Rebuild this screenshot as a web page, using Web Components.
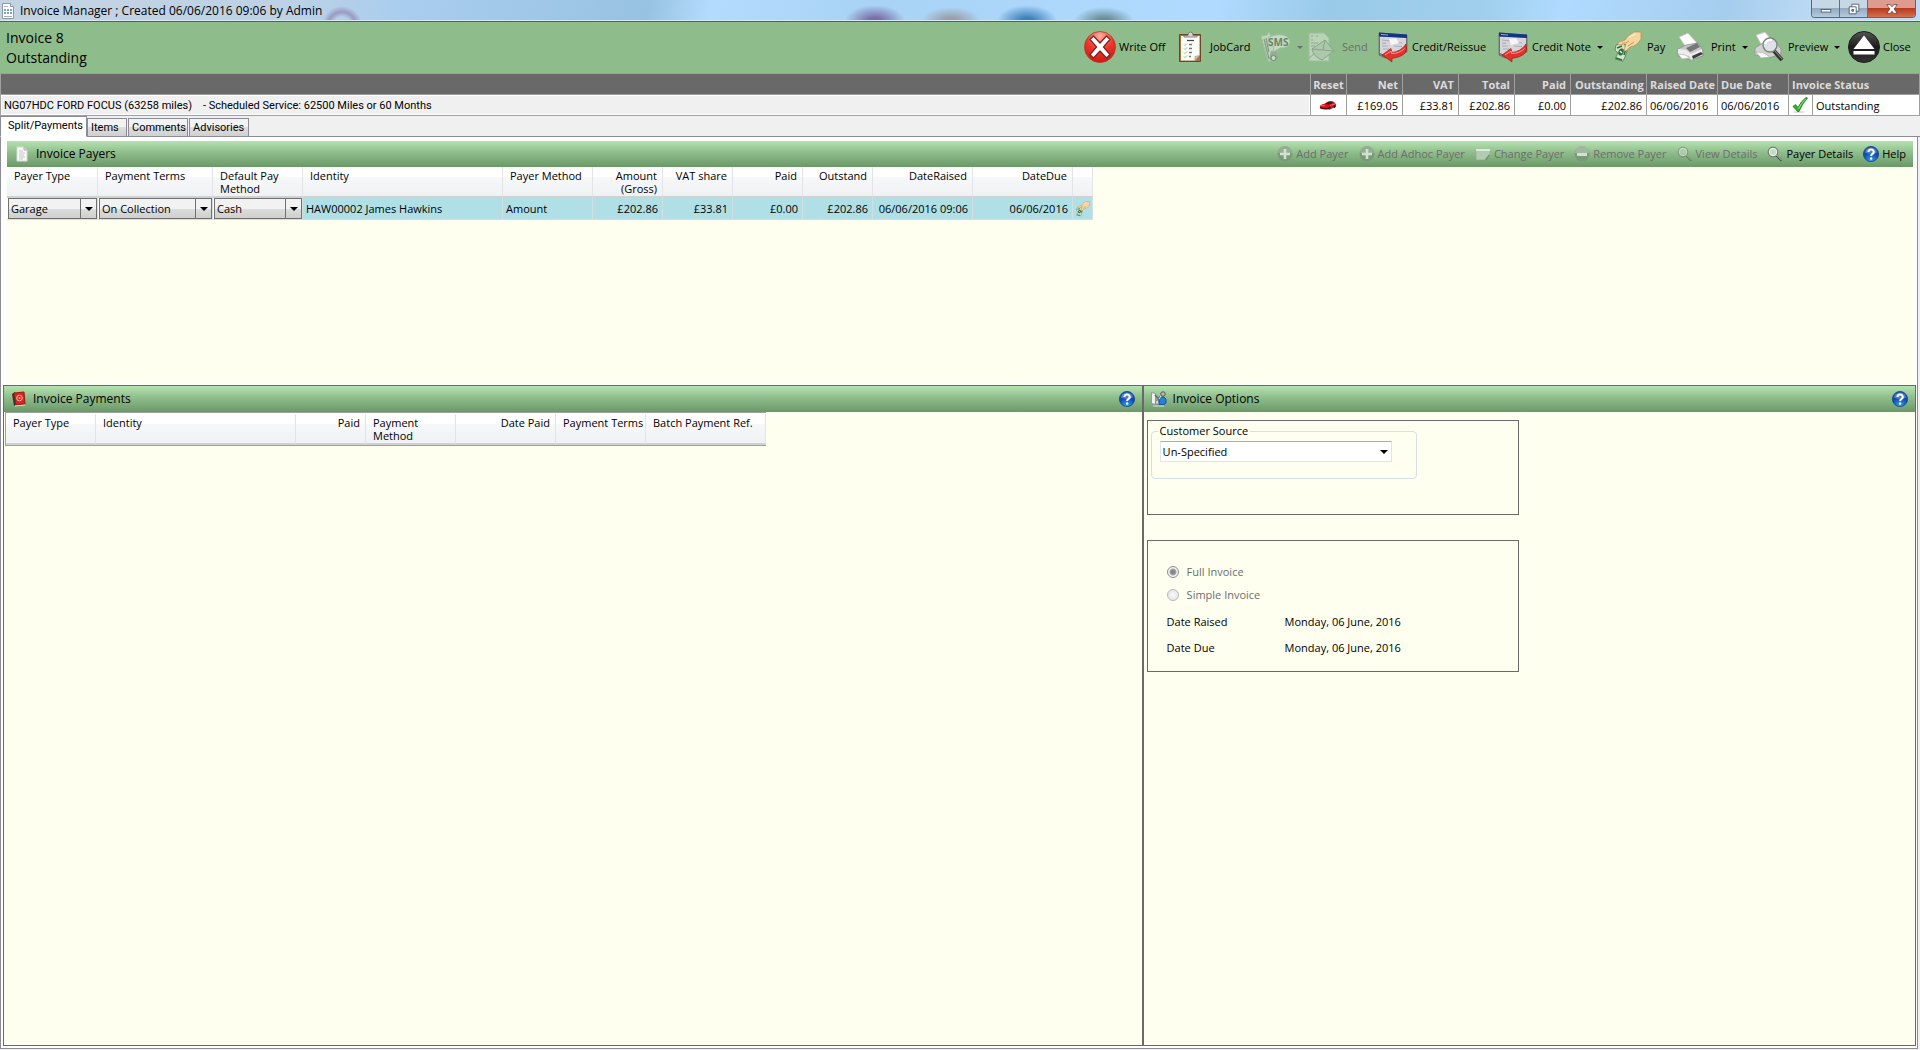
<!DOCTYPE html>
<html lang="en">
<head>
<meta charset="utf-8">
<title>Invoice Manager</title>
<style>
	body {
		margin: 0;
		font: 11px/14px "Open Sans", "Noto Sans", sans-serif;
		color: #000;
		background: #f0f0f0;
	}
</style>
</head>
<body>
<invoice-window></invoice-window>

<script>
// Icon drawings, keyed by name: [viewBox size, markup]
const ICONS = {
	page: [16, `
		<path d="M2.5.5h8l3 3v12h-11z" fill="#fff" stroke="#8d99a3"/>
		<path d="M10.5.5v3h3" fill="#dde3e8" stroke="#8d99a3"/>
		<path d="M4 3.5h4M4 13.5h8" stroke="#a9b3bc"/>
		<path d="M4 6h8v5H4z" fill="#7ba4d0"/>
		<path d="M6.5 6v5M9.5 6v5M4 8.5h8" stroke="#fff"/>`],
	sheet: [16, `
		<path d="M3 1h7l3 3v11H3z" fill="#fafafa" stroke="#d5ddd5"/>
		<path d="M10 1v3h3" fill="#ddd" stroke="#aaa"/>
		<path d="M5 5h4M5 7h6M5 9h5M5 11h6M5 13h4" stroke="#c4c4c4"/>`],
	ledger: [16, `
		<path d="M1 3l3-2 2 12-3 2z" fill="#333"/>
		<path d="M3 2l10-1 1 12-9 1z" fill="#d9251c" stroke="#9d1a14"/>
		<path d="M4 15l10-1" stroke="#ddd"/>
		<circle cx="8.5" cy="7" r="2.8" fill="none" stroke="#ffb9ad"/>
		<circle cx="8.5" cy="7" r="1" fill="#ffb9ad"/>`],
	options: [16, `
		<path d="M.5 1.5l4 1v11l-4-1z" fill="#f0f0f0" stroke="#999"/>
		<path d="M4 13l2-5 3 5z" fill="#e4e4e4" stroke="#888"/>
		<path d="M8 6h5l2 2v4l-2 1.5H8z" fill="#2580dc" stroke="#1a5799"/>
		<circle cx="12" cy="3" r="2.2" fill="#bbb" stroke="#555"/>
		<path d="M4 4l5 5" stroke="#666" stroke-width="1.5"/>
		<path d="M10 5l-2 3" stroke="#eee"/>
		<path d="M2 15h11" stroke="#ddd"/>`],
	help: [16, `
		<defs><radialGradient id="g" cx=".5" cy=".95" r=".9">
			<stop offset="0" stop-color="#35a5f0"/><stop offset=".6" stop-color="#0d4cb4"/><stop offset="1" stop-color="#1b55b3"/>
		</radialGradient></defs>
		<circle cx="8" cy="8" r="7.6" fill="url(#g)" stroke="#17418c" stroke-width=".8"/>
		<path d="M2 6.5a6.2 6.2 0 0 1 12 0q-6 2.5-12 0z" fill="#fff" opacity=".28"/>
		<path d="M5.5 6a2.6 2.4 0 1 1 4 1.9q-1.4.8-1.4 2.1" fill="none" stroke="#fff" stroke-width="2"/>
		<circle cx="8.1" cy="12.5" r="1.2" fill="#fff"/>`],
	add: [16, `
		<circle cx="8" cy="8" r="7.5" fill="#7c9a7b"/>
		<path d="M1 7a7 7 0 0 1 14 0z" fill="#94ae93"/>
		<path d="M8 3v10M3 8h10" stroke="#cfe4cd" stroke-width="2.6"/>`],
	remove: [16, `
		<circle cx="8" cy="8" r="7.5" fill="#7c9a7b"/>
		<path d="M1 7a7 7 0 0 1 14 0z" fill="#9fb99e"/>
		<path d="M3 8.5h10" stroke="#cfe4cd" stroke-width="3"/>`],
	change: [16, `
		<path d="M1.5 3.5h13v7l-3 3h-10z" fill="#b1ccb0" stroke="#a4bfa3"/>
		<path d="M1 4h14" stroke="#dceadb" stroke-width="2"/>
		<path d="M14.5 9l-4 5" stroke="#6f8c6e" stroke-width="1.5"/>`],
	lens: [16, `
		<circle cx="6" cy="6" r="4.8" fill="#c3dcc2" stroke="#6c786c" stroke-width="1.2"/>
		<circle cx="6" cy="6" r="3.7" fill="none" stroke="#f1f6f1"/>
		<path d="M9.5 9.5l5 5" stroke="#444" stroke-width="2.2"/>
		<path d="M9.5 9l5 5" stroke="#ddd"/>`],
	car: [18, `
		<path d="M1 10.5q0-2 4-2.5l4-2.500q4-1 6 .5l1.500 1.500q1 1 .5 3L12 13q-7 1-11-1z" fill="#d3141d"/>
		<path d="M6 8l3.500-2q3-.5 4.500.5l-3 2z" fill="#3a1a1a"/>
		<path d="M1 11.500q5 2 9 .8" stroke="#5b060a" stroke-width="1.4"/>
		<path d="M2 9.500l4 .3M11 9.500l5-1.500" stroke="#ff7f7f" stroke-width=".8"/>
		<ellipse cx="10.500" cy="12" rx="1.2" ry="1.600" fill="#222"/>
		<ellipse cx="15.500" cy="10.500" rx="1" ry="1.500" fill="#222"/>`],
	tick: [16, `
		<ellipse cx="7" cy="15" rx="6" ry="1" fill="#ddd"/>
		<path d="M1 9.500l2.500-2L6 10.500Q9 4 14 .5l1.500.5Q10 7 7 14.500H5.500Q3.500 12 1 9.500z" fill="#36b22c" stroke="#1b7a19" stroke-width=".8"/>
		<path d="M6.500 12Q9 6 13.500 2" stroke="#9be58f" fill="none"/>`],
	writeoff: [32, `
		<defs><radialGradient id="g" cx=".5" cy=".15" r=".9">
			<stop offset="0" stop-color="#ffb0a0"/><stop offset=".5" stop-color="#f0342d"/><stop offset="1" stop-color="#cc1410"/>
		</radialGradient></defs>
		<circle cx="16" cy="16" r="15.5" fill="url(#g)" stroke="#b9332c" stroke-width=".8"/>
		<path d="M6 8.500L9.500 5 16 12l6.500-7L26 8.500 19.500 16l6.500 7.500L22.500 27 16 20l-6.500 7L6 23.500 12.500 16z" fill="#fff" stroke="#7c221d" stroke-width="1.2" stroke-linejoin="round"/>`],
	jobcard: [32, `
		<path d="M4.500 3.500h21v27h-21z" fill="#a77445" stroke="#704621"/>
		<path d="M6 5h18.500v19.500l-4.500 5H6z" fill="#fbfbf7"/>
		<path d="M24.500 24.500l-4.500 5v-4z" fill="#cfcabb" stroke="#928b78" stroke-width=".6"/>
		<path d="M9 6V4.500h4Q13 1 15.500 1T18 4.500h4V6z" fill="#d5d5d5" stroke="#707070" stroke-width=".8"/>
		<path d="M12 9.500h7" stroke="#444" stroke-width="1.2"/>
		<path d="M9 13.500l1 1 2-2M9 17.500l1 1 2-2M9 21.500l1 1 2-2M9 25.500l1 1 2-2" fill="none" stroke="#6db381" stroke-width=".8"/>
		<path d="M14 13.500h3M14 17.500h3M14 21.500h3M14 25.500h2" stroke="#777" stroke-width="1.4"/>`],
	sms: [32, `
		<path d="M2 5l6-1 2-3 2 4 4 1-1 3 4 12-3 9H9z" fill="#bdd7bb" stroke="#a0bd9f"/>
		<path d="M5 8l5 20M7 7l3 14" stroke="#7f9c7e" stroke-width="1.2"/>
		<path d="M12 20l6-1 1 8-5 4-4-3z" fill="#91ac90"/>
		<circle cx="14.5" cy="27" r="2.5" fill="#c6dac5" stroke="#718d70"/>
		<path d="M10 6q10-4 17-1 4 2 4 7-2 5-10 5l-7 4 1-5q-5-1-6-5 0-4 1-5z" fill="#c4dbc2" stroke="#a3bfa2"/>
		<text x="9" y="15" font-family="Open Sans, sans-serif" font-size="10" font-weight="700" fill="#698568">SMS</text>`],
	send: [32, `
		<path d="M2 2h15l5 5v23H2z" fill="#b8d3b7" stroke="#a0bd9f"/>
		<path d="M4 5h2M9 5h2M4 9h2M4 12h7M4 15h4" stroke="#9ab699" stroke-width="1.5"/>
		<path d="M5 18L18 9l9 11-12 9q-9-4-10-11z" fill="#abc9aa" stroke="#88a587"/>
		<path d="M5 18l11 1 2-10M27 20l-11-1" fill="none" stroke="#88a587"/>
		<path d="M2 27l5-4" stroke="#8eac8d"/>`],
	credit: [32, `
		<path d="M2 2l28 2v17L8 27l-6-3z" fill="#77777d" stroke="#5c5c63" stroke-width=".6"/>
		<path d="M3 5.500l26 1V20L8 24l-5-2z" fill="#d6d6da"/>
		<path d="M2 1.500l28 2V7L2 5.500z" fill="#143488"/>
		<path d="M4 3.500l7 .5" stroke="#b7c5ec" stroke-width=".8"/>
		<path d="M5 9l8 1M5 12l4 .3M16 11l9 1M5 15h6M17 15l8 .5M6 18h8" stroke="#acacb5" stroke-width="1.2"/>
		<path d="M12 8l7-1 3 5-8 2z" fill="#f6f6f8"/>
		<path d="M29 13q4 12-14 14.500v3.500L5 24l9-6.500 1 4q9-1 14-8.500z" fill="#e6302c" stroke="#9c1717" stroke-width=".6"/>
		<path d="M8 24l6-4 .5 2.500q8 0 13-5" fill="none" stroke="#ff9c92"/>`],
	pay: [32, `
		<path d="M4 14l8-2 3 8-2 6-2 4-8-2 3-6-3-3z" fill="#cfe8c6" stroke="#4e7a53" stroke-width=".8"/>
		<path d="M5 17l5-2M4 27l6 2M12 24l2-6" stroke="#2f6b40" stroke-width="1.5"/>
		<ellipse cx="9" cy="21" rx="2.6" ry="3.6" fill="#2f6b40" transform="rotate(20 9 21)"/>
		<path d="M8 20l2 2" stroke="#e4f4dd" stroke-width="1.5"/>
		<path d="M29 1v7q-4 7-11 8l-4 4q-3 0-1-4l1-3-7 1q-2-1 0-3l6-2 3-4 6-4z" fill="#f5d5a0" stroke="#b88c55" stroke-width=".7"/>
		<path d="M10 12q4 1 7-2M16 15l6-4" fill="none" stroke="#c99a60"/>
		<path d="M17 6l7-3" stroke="#fff0ce"/>`],
	print: [32, `
		<path d="M3 6l9-4 9 10-10 6z" fill="#fff" stroke="#bcbcbc" stroke-width=".8"/>
		<path d="M2 18l8-4 12-2 5 7v6l-13 4L2 25z" fill="#c9c9c9" stroke="#8a8a8a" stroke-width=".8"/>
		<path d="M10 17l11-5 3 4-10 5z" fill="#777"/>
		<path d="M2 18l8 1 5 4 11-5v6l-11 5-2-4-11-2z" fill="#ededed"/>
		<path d="M16 25l9-4 2 2-10 5z" fill="#3d3d3d"/>
		<path d="M2 23l7 1 5 3-8 1z" fill="#fff" stroke="#aaa" stroke-width=".6"/>`],
	preview: [32, `
		<path d="M3 4l9-3 8 10-10 6z" fill="#fff" stroke="#bcbcbc" stroke-width=".8"/>
		<path d="M2 17l8-5 12-2 6 8v5l-12 4-14-3z" fill="#d2d2d2" stroke="#8f8f8f" stroke-width=".8"/>
		<path d="M3 21l8 1 6 4-9 1z" fill="#fff" stroke="#aaa" stroke-width=".6"/>
		<path d="M21 20l8 9" stroke="#333" stroke-width="4"/>
		<path d="M21 19l8 9" stroke="#999"/>
		<circle cx="17" cy="14" r="7" fill="#dfe6e8" fill-opacity=".85" stroke="#7d7d7d" stroke-width="1.3"/>
		<path d="M12 13q2-5 7-4" fill="none" stroke="#fff" stroke-width="2"/>`],
	eject: [32, `
		<defs><linearGradient id="g" x2="0" y2="1"><stop offset="0" stop-color="#555"/><stop offset=".5" stop-color="#1c1c1c"/><stop offset="1" stop-color="#333"/></linearGradient></defs>
		<circle cx="16" cy="16" r="15.5" fill="url(#g)" stroke="#1d1d1d"/>
		<path d="M16 4.500L26.500 18h-21zM5.500 20h21v3.500h-21z" fill="#fff"/>`],
	minimise: [16, `<rect x="2.5" y="8.5" width="11" height="3" fill="#fff" stroke="#4b5a6b"/>`],
	restore: [16, `
		<path d="M5.5 2.5h8v8h-8z" fill="#fff" stroke="#4b5a6b"/>
		<path d="M2.5 5.5h8v8h-8z" fill="#fff" stroke="#4b5a6b"/>
		<path d="M5.5 8.5h2v2h-2z" fill="#8fa5bb" stroke="#4b5a6b"/>`],
	cross: [16, `<path d="M2 3h4l2 2.500L10 3h4l-3.500 5 3.500 5h-4l-2-2.500L6 13H2l3.500-5z" fill="#fff" stroke="#5d2a2a" stroke-width=".8"/>`]
};

class AppIcon extends HTMLElement {
	constructor() {
		super();
		this.attachShadow({ mode: 'open' });
	}

	connectedCallback() {
		const [box, markup] = ICONS[this.getAttribute('name')];
		const size = this.getAttribute('size') || box;
		this.shadowRoot.innerHTML = `
			<style>
				:host { display: inline-block; flex: none; vertical-align: top; }
				svg { display: block; }
			</style>
			<svg width="${size}" height="${size}" viewBox="0 0 ${box} ${box}" fill="none" aria-hidden="true">${markup}</svg>
		`;
	}
}
customElements.define('app-icon', AppIcon);

// Flat button with an icon, a label in the slot and an optional drop-down caret
class ToolButton extends HTMLElement {
	constructor() {
		super();
		this.attachShadow({ mode: 'open' });
	}

	connectedCallback() {
		const size = this.getAttribute('size') || 16;
		this.shadowRoot.innerHTML = `
			<style>
				:host { display: block; }
				button {
					display: flex;
					align-items: center;
					gap: 3px;
					padding: 0;
					border: 0;
					background: none;
					color: inherit;
					font: inherit;
					white-space: nowrap;
				}
				button:disabled { color: #6d6d6d; }
				:host([faded]) app-icon { opacity: 0.5; }
				.caret {
					margin-left: 3px;
					border: solid transparent;
					border-width: 3px 3px 0;
					border-top-color: currentColor;
				}
			</style>
			<button type="button" ${this.hasAttribute('disabled') ? 'disabled' : ''} aria-label="${this.getAttribute('label') || this.textContent}">
				<app-icon name="${this.getAttribute('icon')}" size="${size}"></app-icon>
				<slot></slot>
				${this.hasAttribute('menu') ? '<span class="caret"></span>' : ''}
			</button>
		`;
	}
}
customElements.define('tool-button', ToolButton);

class TitleBar extends HTMLElement {
	constructor() {
		super();
		this.attachShadow({ mode: 'open' }).innerHTML = `
			<style>
				:host {
					display: flex;
					justify-content: space-between;
					box-sizing: border-box;
					height: 22px;
					padding: 0 4px 0 0;
					border-bottom: 1px solid #4c6070;
					box-shadow: inset 0 -1px #dbe9f5;
					font-size: 12px;
					background:
						radial-gradient(circle at 342px 26px, transparent 9px, #8f7faeaa 14px, transparent 20px),
						radial-gradient(30px 16px at 875px 21px, #7a6fa8 20%, #7a6fa800),
						radial-gradient(30px 14px at 951px 21px, #9a9ea6 20%, #9a9ea600),
						radial-gradient(30px 16px at 1027px 21px, #3c82bd 20%, #3c82bd00),
						radial-gradient(30px 14px at 1104px 21px, #688f98 20%, #688f9800),
						linear-gradient(100deg, #c3d3e3 0, #bdd2e6 280px, #a9cdee 400px, #98c2e2 640px, #b3dbfd 700px, #a9d3f5 850px, #b0daff 1200px, #99cae8 1310px, #9fcfec 1460px, #b0daff 1540px, #a5cdee 1700px, #bfdbf5 1800px);
				}
				.caption { display: flex; align-items: center; gap: 2px; }
				.caption span { padding: 0 2px; }
				.controls {
					display: flex;
					height: 17px;
					border: 1px solid #56697c;
					border-top: 0;
					border-radius: 0 0 4px 4px;
					overflow: hidden;
				}
				button {
					display: grid;
					place-items: center;
					width: 28px;
					padding: 0;
					border: 0;
					border-right: 1px solid #5d7083;
					background: linear-gradient(#c6d7e6 45%, #94aabf 50%, #b5cce0);
				}
				button.close {
					width: 47px;
					border: 0;
					background: linear-gradient(#dd9c8e 45%, #b83a20 50%, #d4704f);
				}
			</style>
			<div class="caption"><app-icon name="page"></app-icon><span><slot></slot></span></div>
			<div class="controls">
				<button type="button" aria-label="Minimise"><app-icon name="minimise" size="14"></app-icon></button>
				<button type="button" aria-label="Restore"><app-icon name="restore" size="14"></app-icon></button>
				<button type="button" class="close" aria-label="Close window"><app-icon name="cross" size="14"></app-icon></button>
			</div>
		`;
	}
}
customElements.define('title-bar', TitleBar);

class InvoiceToolbar extends HTMLElement {
	constructor() {
		super();
		this.attachShadow({ mode: 'open' }).innerHTML = `
			<style>
				:host {
					display: flex;
					justify-content: space-between;
					align-items: flex-start;
					box-sizing: border-box;
					height: 51px;
					padding: 6px 5px 0 6px;
					background: #8fbc8b;
				}
				h1 {
					margin: 0;
					font-size: 14px;
					font-weight: 400;
					line-height: 20px;
				}
				nav {
					display: grid;
					grid-template-columns: 91px 84px 48px 70px 120px 115px 64px 77px 95px 67px;
					padding-top: 3px;
				}
			</style>
			<h1>Invoice 8<br>Outstanding</h1>
			<nav>
				<tool-button size="32" icon="writeoff">Write Off</tool-button>
				<tool-button size="32" icon="jobcard">JobCard</tool-button>
				<tool-button size="32" icon="sms" label="SMS" menu disabled></tool-button>
				<tool-button size="32" icon="send" disabled>Send</tool-button>
				<tool-button size="32" icon="credit">Credit/Reissue</tool-button>
				<tool-button size="32" icon="credit" menu>Credit Note</tool-button>
				<tool-button size="32" icon="pay">Pay</tool-button>
				<tool-button size="32" icon="print" menu>Print</tool-button>
				<tool-button size="32" icon="preview" menu>Preview</tool-button>
				<tool-button size="32" icon="eject">Close</tool-button>
			</nav>
		`;
	}
}
customElements.define('invoice-toolbar', InvoiceToolbar);

class InvoiceSummary extends HTMLElement {
	constructor() {
		super();
		this.attachShadow({ mode: 'open' }).innerHTML = `
			<style>
				:host { display: block; }
				table {
					width: 100%;
					table-layout: fixed;
					border-collapse: collapse;
				}
				th, td {
					box-sizing: border-box;
					height: 21px;
					padding: 2px 4px 0;
					border: 1px solid #a0a0a0;
					text-align: right;
					white-space: nowrap;
				}
				th { color: #dcdcdc; background: #696969; }
				td { background: #fff; }
				.left { text-align: left; padding: 2px 3px 0; }
				.icon { padding: 0; text-align: center; }
				th.icon { padding-top: 2px; }
				.icon app-icon { vertical-align: middle; }
				td.vehicle {
					background: #f0f0f0;
					box-shadow: inset 0 0 0 1px #fff;
					font-family: Roboto, "Liberation Sans", sans-serif;
					white-space: pre;
				}
			</style>
			<table>
				<colgroup>
					<col><col style="width:36px"><col style="width:56px"><col style="width:56px">
					<col style="width:56px"><col style="width:56px"><col style="width:76px">
					<col style="width:71px"><col style="width:71px"><col style="width:24px"><col style="width:107px">
				</colgroup>
				<tr>
					<th></th><th class="icon">Reset</th><th>Net</th><th>VAT</th><th>Total</th><th>Paid</th>
					<th>Outstanding</th><th class="left">Raised Date</th><th class="left">Due Date</th>
					<th class="left" colspan="2">Invoice Status</th>
				</tr>
				<tr>
					<td class="left vehicle">NG07HDC FORD FOCUS (63258 miles)    - Scheduled Service: 62500 Miles or 60 Months</td>
					<td class="icon"><app-icon name="car"></app-icon></td>
					<td>£169.05</td><td>£33.81</td><td>£202.86</td><td>£0.00</td><td>£202.86</td>
					<td class="left">06/06/2016</td><td class="left">06/06/2016</td>
					<td class="icon"><app-icon name="tick"></app-icon></td>
					<td class="left">Outstanding</td>
				</tr>
			</table>
		`;
	}
}
customElements.define('invoice-summary', InvoiceSummary);

class TabStrip extends HTMLElement {
	constructor() {
		super();
		this.attachShadow({ mode: 'open' }).innerHTML = `
			<style>
				:host {
					display: block;
					font-family: Roboto, "Liberation Sans", sans-serif;
				}
				div {
					display: flex;
					align-items: flex-end;
					height: 21px;
					box-shadow: inset 0 -1px #8b8c95;
				}
				button {
					box-sizing: border-box;
					height: 19px;
					margin-right: 1px;
					padding: 1px 3px 0;
					border: 1px solid #8b8c95;
					background: linear-gradient(#f3f3f3 50%, #dedede 50%, #d0d0d0);
					font: inherit;
					text-align: left;
					color: inherit;
				}
				button[aria-selected="true"] {
					height: 21px;
					width: 87px;
					margin: 0;
					padding: 0 7px 2px;
					border-bottom-color: #fff;
					background: #fff;
				}
				.narrow { width: 40px; }
				.wide { width: 60px; }
			</style>
			<div role="tablist">
				<button type="button" role="tab" aria-selected="true">Split/Payments</button>
				<button type="button" role="tab" aria-selected="false" class="narrow">Items</button>
				<button type="button" role="tab" aria-selected="false" class="wide">Comments</button>
				<button type="button" role="tab" aria-selected="false" class="wide">Advisories</button>
			</div>
		`;
	}
}
customElements.define('tab-strip', TabStrip);

// Green gradient heading; actions go in the "actions" slot
class PanelHeader extends HTMLElement {
	constructor() {
		super();
		this.attachShadow({ mode: 'open' });
	}

	connectedCallback() {
		this.shadowRoot.innerHTML = `
			<style>
				:host {
					display: flex;
					align-items: center;
					justify-content: space-between;
					height: 26px;
					padding: 0 7px;
					background: linear-gradient(#b5e3b0, #8fbc8b 45%, #6a9967);
				}
				h2 {
					display: flex;
					align-items: center;
					gap: 6px;
					margin: 0;
					font-size: 12px;
					font-weight: 400;
				}
				div { display: flex; gap: 10px; }
			</style>
			<h2><app-icon name="${this.getAttribute('icon')}"></app-icon><slot></slot></h2>
			<div><slot name="actions"></slot></div>
		`;
	}
}
customElements.define('panel-header', PanelHeader);

// Drop-down list; variant "button" has the raised look used in grids
class DropList extends HTMLElement {
	constructor() {
		super();
		this.attachShadow({ mode: 'open' });
	}

	connectedCallback() {
		this.shadowRoot.innerHTML = `
			<style>
				:host { display: grid; height: 21px; }
				select, .arrow { grid-area: 1 / 1; }
				select {
					appearance: none;
					box-sizing: border-box;
					width: 100%;
					min-width: 0;
					padding: 0 20px 0 2px;
					border: 1px solid #e3e3ea;
					border-top-color: #abadb3;
					border-radius: 0;
					background: #fff;
					color: inherit;
					font: inherit;
				}
				.arrow {
					display: grid;
					place-items: center;
					justify-self: end;
					width: 16px;
					pointer-events: none;
				}
				.arrow::after {
					content: "";
					border: solid transparent;
					border-width: 4px 4px 0;
					border-top-color: #000;
				}
				:host([variant="button"]) select {
					border-color: #707070;
					background: linear-gradient(#f2f2f2 50%, #dddddd 50%, #cfcfcf);
				}
				:host([variant="button"]) .arrow { border-left: 1px solid #707070; }
			</style>
			<select aria-label="${this.getAttribute('label')}"><option>${this.getAttribute('value')}</option></select>
			<span class="arrow"></span>
		`;
	}
}
customElements.define('drop-list', DropList);

// Grid with fixed columns: columns = [{ title, width, right }], rows = [[html, ...]]
class DataGrid extends HTMLElement {
	constructor() {
		super();
		this.attachShadow({ mode: 'open' });
	}

	set data({ columns, rows }) {
		const total = columns.reduce((sum, col) => sum + col.width, 0);
		const side = col => col.right ? 'class="right"' : '';
		this.shadowRoot.innerHTML = `
			<style>
				:host { display: block; width: max-content; }
				:host([framed]) {
					margin-left: 1px;
					padding-top: 1px;
					border: solid #a0a0a0;
					border-width: 1px 0 1px 1px;
					background: #fff;
				}
				table {
					table-layout: fixed;
					border-spacing: 0;
				}
				th {
					box-sizing: border-box;
					height: 31px;
					padding: 2px 5px 0 7px;
					border-right: 1px solid #e2e4e8;
					border-bottom: 2px solid #d0d1d3;
					background: linear-gradient(#fff 34%, #f7f8fa 34%, #f0f1f3);
					font-weight: 400;
					line-height: 13px;
					text-align: left;
					vertical-align: top;
					white-space: nowrap;
				}
				td {
					box-sizing: border-box;
					height: 22px;
					padding: 0 4px 0 3px;
					border-right: 1px solid #d3dfe1;
					border-bottom: 1px solid #d3dfe1;
					background: #b0e0e6;
					white-space: nowrap;
				}
				td.control { padding: 0 0 0 1px; background: #fff; }
				.right { text-align: right; }
				td.icon { padding: 0; text-align: center; }
				td.icon app-icon { vertical-align: middle; }
			</style>
			<table style="width:${total}px">
				<colgroup>${columns.map(col => `<col style="width:${col.width}px">`).join('')}</colgroup>
				<thead><tr>${columns.map(col => `<th ${side(col)}>${col.title}</th>`).join('')}</tr></thead>
				<tbody>${rows.map(row => `<tr>${row.map((cell, i) => {
					if (cell.startsWith('<drop-list')) return `<td class="control">${cell}</td>`;
					if (cell.startsWith('<app-icon')) return `<td class="icon">${cell}</td>`;
					return `<td ${side(columns[i])}>${cell}</td>`;
				}).join('')}</tr>`).join('')}</tbody>
			</table>
		`;
	}
}
customElements.define('data-grid', DataGrid);

class InvoiceOptions extends HTMLElement {
	constructor() {
		super();
		this.attachShadow({ mode: 'open' }).innerHTML = `
			<style>
				:host {
					display: grid;
					gap: 25px;
					padding: 8px 3px;
					justify-items: start;
				}
				section {
					box-sizing: border-box;
					width: 372px;
					border: 1px solid #696969;
				}
				.source { height: 95px; padding: 2px 3px; }
				fieldset {
					box-sizing: border-box;
					width: 266px;
					height: 56px;
					margin: 0;
					padding: 2px 24px 0 8px;
					border: 1px solid #d5dfe5;
					border-radius: 4px;
				}
				legend { margin-left: -2px; padding: 0 2px; line-height: 16px; }
				.kind { padding: 19px 19px 10px; }
				.radio {
					display: flex;
					align-items: center;
					gap: 8px;
					height: 23px;
					color: #6d6d6d;
				}
				input {
					appearance: none;
					box-sizing: border-box;
					width: 12px;
					height: 12px;
					margin: 0;
					border: 1px solid #b8b8b8;
					border-radius: 50%;
					background: radial-gradient(#fafafa, #e0e0e0);
				}
				input:checked {
					border-color: #8c8c8c;
					background: radial-gradient(#888 0 2px, #aaa 3px, #f4f4f4 4px);
				}
				dl {
					display: grid;
					grid-template-columns: 118px 1fr;
					margin: 3px 0 0;
					line-height: 26px;
				}
				dd { margin: 0; }
			</style>
			<section class="source">
				<fieldset>
					<legend>Customer Source</legend>
					<drop-list label="Customer Source" value="Un-Specified"></drop-list>
				</fieldset>
			</section>
			<section class="kind">
				<label class="radio"><input type="radio" name="kind" checked disabled>Full Invoice</label>
				<label class="radio"><input type="radio" name="kind" disabled>Simple Invoice</label>
				<dl>
					<dt>Date Raised</dt><dd>Monday, 06 June, 2016</dd>
					<dt>Date Due</dt><dd>Monday, 06 June, 2016</dd>
				</dl>
			</section>
		`;
	}
}
customElements.define('invoice-options', InvoiceOptions);

class InvoiceWindow extends HTMLElement {
	constructor() {
		super();
		this.attachShadow({ mode: 'open' }).innerHTML = `
			<style>
				:host {
					display: flex;
					flex-direction: column;
					min-height: 100vh;
				}
				main {
					flex: 1;
					display: flex;
					flex-direction: column;
					gap: 2px;
					box-sizing: border-box;
					margin: 0 2px 1px 0;
					padding: 4px 1px 2px 2px;
					border: 1px solid #8b8c95;
					border-top: 0;
					background: #fff;
				}
				.payers {
					height: 242px;
					margin: 0 3px 0 4px;
					background: #fffff0;
				}
				.panes {
					flex: 1;
					display: grid;
					grid-template-columns: 1140fr 773fr;
					gap: 2px;
					border: 1px solid #696969;
					background: #696969;
				}
				.pane { background: #fffff0; }
			</style>
			<title-bar>Invoice Manager ; Created 06/06/2016 09:06 by Admin</title-bar>
			<invoice-toolbar></invoice-toolbar>
			<invoice-summary></invoice-summary>
			<tab-strip></tab-strip>
			<main>
				<section class="payers">
					<panel-header icon="sheet">Invoice Payers
						<tool-button slot="actions" icon="add" disabled>Add Payer</tool-button>
						<tool-button slot="actions" icon="add" disabled>Add Adhoc Payer</tool-button>
						<tool-button slot="actions" icon="change" disabled>Change Payer</tool-button>
						<tool-button slot="actions" icon="remove" disabled>Remove Payer</tool-button>
						<tool-button slot="actions" icon="lens" disabled faded>View Details</tool-button>
						<tool-button slot="actions" icon="lens">Payer Details</tool-button>
						<tool-button slot="actions" icon="help">Help</tool-button>
					</panel-header>
					<data-grid></data-grid>
				</section>
				<div class="panes">
					<section class="pane">
						<panel-header icon="ledger">Invoice Payments
							<tool-button slot="actions" icon="help" label="Help"></tool-button>
						</panel-header>
						<data-grid framed></data-grid>
					</section>
					<section class="pane">
						<panel-header icon="options">Invoice Options
							<tool-button slot="actions" icon="help" label="Help"></tool-button>
						</panel-header>
						<invoice-options></invoice-options>
					</section>
				</div>
			</main>
		`;
	}

	connectedCallback() {
		const [payers, payments] = this.shadowRoot.querySelectorAll('data-grid');

		payers.data = {
			columns: [
				{ title: 'Payer Type', width: 91 },
				{ title: 'Payment Terms', width: 115 },
				{ title: 'Default Pay<br>Method', width: 90 },
				{ title: 'Identity', width: 200 },
				{ title: 'Payer Method', width: 90 },
				{ title: 'Amount<br>(Gross)', width: 70, right: true },
				{ title: 'VAT share', width: 70, right: true },
				{ title: 'Paid', width: 70, right: true },
				{ title: 'Outstand', width: 70, right: true },
				{ title: 'DateRaised', width: 100, right: true },
				{ title: 'DateDue', width: 100, right: true },
				{ title: '', width: 20 }
			],
			rows: [[
				'<drop-list variant="button" label="Payer Type" value="Garage"></drop-list>',
				'<drop-list variant="button" label="Payment Terms" value="On Collection"></drop-list>',
				'<drop-list variant="button" label="Default Pay Method" value="Cash"></drop-list>',
				'HAW00002 James Hawkins', 'Amount', '£202.86', '£33.81', '£0.00', '£202.86',
				'06/06/2016 09:06', '06/06/2016', '<app-icon name="pay" size="16"></app-icon>'
			]]
		};

		payments.data = {
			columns: [
				{ title: 'Payer Type', width: 90 },
				{ title: 'Identity', width: 200 },
				{ title: 'Paid', width: 70, right: true },
				{ title: 'Payment<br>Method', width: 90 },
				{ title: 'Date Paid', width: 100, right: true },
				{ title: 'Payment Terms', width: 90 },
				{ title: 'Batch Payment Ref.', width: 120 }
			],
			rows: []
		};
	}
}
customElements.define('invoice-window', InvoiceWindow);
</script>
</body>
</html>
